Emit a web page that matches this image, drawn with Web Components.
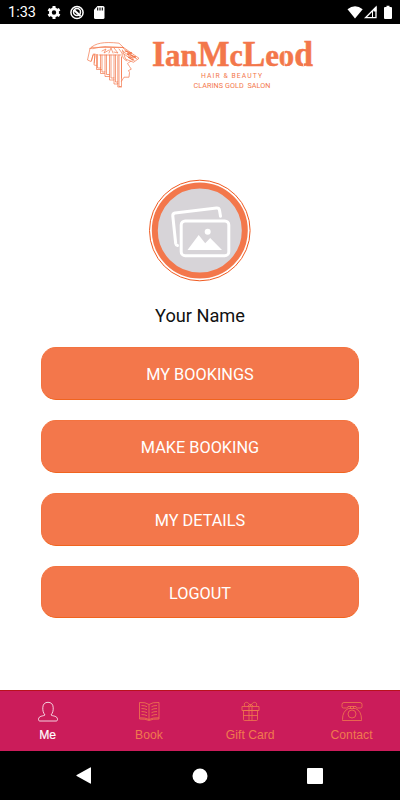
<!DOCTYPE html>
<html lang="en">
<head>
<meta charset="utf-8">
<title>Ian McLeod</title>
<style>
    body {
        margin: 0;
        background: #fff;
        font-family: Roboto, sans-serif;
    }
</style>
</head>
<body>
<salon-app></salon-app>

<script>
class StatusBar extends HTMLElement {
    constructor() {
        super();
        this.attachShadow({ mode: 'open' });
        this.shadowRoot.innerHTML = `
            <style>
                :host {
                    display: flex;
                    align-items: center;
                    height: 24px;
                    box-sizing: border-box;
                    padding: 0 7px 0 8px;
                    background: #000;
                    color: #fff;
                    font-size: 14.5px;
                }
                .time { width: 39px; line-height: 24px; padding-top: 2px; }
                svg { display: block; }
                .right { margin-left: auto; }
            </style>
            <span class="time"><slot></slot></span>
            <svg width="60" height="24" viewBox="0 0 60 24" fill="none" stroke="#fff">
                <circle cx="7" cy="12.5" r="3.6" stroke-width="2.8"/>
                <path d="M7 6v2.2M7 16.8V19M1.4 9.3l1.9 1.1M10.7 14.6l1.9 1.1M1.4 15.7l1.9-1.1M10.7 10.4l1.9-1.1" stroke-width="3"/>
                <circle cx="30" cy="12.5" r="6.1" stroke-width="1.5"/>
                <circle cx="30" cy="12.1" r="3.5" stroke-width="1.5"/>
                <path d="M27 10l6.5 6" stroke-width="2.2"/>
                <path d="M50.5 6H56q1.5 0 1.5 1.5v10q0 1.5-1.5 1.5h-7.5q-1.5 0-1.5-1.5V9.7z" fill="#fff" stroke="none"/>
                <path d="M50.7 7.5v3M53 7.5v3M55.3 7.5v3" stroke="#000" stroke-width="1.1"/>
            </svg>
            <svg class="right" width="46" height="24" viewBox="0 0 46 24">
                <path d="M.5 9.2Q8 3.2 15.7 9.2L8 18.5z" fill="#fff"/>
                <path d="M18.5 17.7L29 7v10.7z" fill="none" stroke="#fff" stroke-width="1.3"/>
                <path d="M26.5 9.5l3-3v5h-3z" fill="#fff"/>
                <path d="M25.5 11v6.5" stroke="#fff" stroke-width="1"/>
                <path d="M39.5 5.8h3V7H44q1 0 1 1v10q0 1-1 1h-6q-1 0-1-1V8q0-1 1-1h1.5z" fill="#fff"/>
            </svg>
        `;
    }
}
customElements.define('status-bar', StatusBar);

class SalonLogo extends HTMLElement {
    constructor() {
        super();
        this.attachShadow({ mode: 'open' });
        this.shadowRoot.innerHTML = `
            <style>
                :host { display: flex; justify-content: center; height: 72px; }
                svg { display: block; }
                .word {
                    font: bold 35px "Liberation Serif", serif;
                    stroke: #f3774b;
                    stroke-width: .5;
                }
                .small { font-family: Roboto, sans-serif; }
            </style>
            <svg width="400" height="72" viewBox="0 24 400 72" fill="#f3774b">
                <!-- profile with pleated headdress -->
                <g fill="none" stroke="#f3774b" stroke-width=".7" stroke-linejoin="round" stroke-linecap="round">
                    <path d="M90 48.5C95 43 104 41.5 119 43.2l4.5 4.3-32-.1"/>
                    <path d="M90 48.5c4 1.2 8-1.8 15-2l18.5 1"/>
                    <path d="M90 48.5L87.5 60l3.5 1.5 2.3-7.5M91.5 61l1.5-6 2-1-.8 9"/>
                    <path d="M95 54l-1 11 2.500.5V54.5M97.5 54.5V68h3V55M102 55v17h3V55M106.5 55v19.5h3V55M111 55v23h3V55M115.5 55v27h2.3V56M119 55v31.5h2.5V57"/>
                    <path d="M96.5 65.5v4h5M100.5 68v5.5h4M105 72v4.5h4.5v-2M109.5 76v4h4.5v-2M114 80v4h3.8v-2M117.8 83.5v3.5h3.7"/>
                    <path d="M102 51l4-2-2 4 5-3M109 53l2-5 2 5M114 48l4 5-4-1M119 49l3 4M99 55h22"/>
                    <path d="M123.5 47.5L139 58.3l-5.5 4-8-3.3-3-9M123 48l8 6.5M122.5 51l11 8M124 54l9 6.5M126 51l11 8M131 55l4 3M122 53c0 4 2 7 5 8"/>
                    <path d="M125 51l7 2-5 1 9 3-8 .2 6 3" stroke-width="1"/>
                    <path d="M131 61l-3.5 2.5 2 3 1.8 2.7-2.8 1.3 1 2-.5 4.7h-5l-2.5 4M121.5 57v21"/>
                </g>
                <text class="word" x="152" y="66" textLength="161" lengthAdjust="spacingAndGlyphs">I<tspan font-size="32">an</tspan>M<tspan font-size="31">c</tspan>L<tspan font-size="32">eo</tspan>d</text>
                <!-- stencil cuts through the wordmark -->
                <path d="M284.3 51v16M303.500 52v14" fill="none" stroke="#fff" stroke-width=".6"/>
                <text class="small" x="201" y="77.7" font-size="6.8" textLength="61">HAIR &amp; BEAUTY</text>
                <text class="small" x="193.5" y="88.2" font-size="7.2" textLength="77" xml:space="preserve">CLARINS GOLD  SALON</text>
            </svg>
        `;
    }
}
customElements.define('salon-logo', SalonLogo);

class ProfilePhoto extends HTMLElement {
    constructor() {
        super();
        this.attachShadow({ mode: 'open' });
        this.shadowRoot.innerHTML = `
            <style>
                :host { display: flex; flex-direction: column; align-items: center; }
                svg { display: block; }
                .name {
                    margin-top: 22px;
                    font-size: 18.2px;
                    line-height: 24px;
                    color: #111;
                }
            </style>
            <svg width="104" height="104" viewBox="148 178 104 104">
                <circle cx="199.8" cy="230.5" r="50.3" fill="#fff" stroke="#f05a20" stroke-width="1"/>
                <circle cx="199.8" cy="230.5" r="45" fill="#d7d4d8" stroke="#f3774b" stroke-width="6"/>
                <g fill="none" stroke="#fff" stroke-width="3" stroke-linejoin="round" stroke-linecap="round">
                    <path d="M177.5 245.5q-1.5-.2-1.8-2L172.800 216q-.2-2.500 2.200-3l41.500-5q2.600-.2 3 2.200l1 6"/>
                    <rect x="181.2" y="221" width="47.6" height="34.7" rx="4"/>
                </g>
                <circle cx="207.7" cy="231.7" r="3" fill="#fff"/>
                <path d="M187.5 250l11.2-15 6.5 8.3 5-5.3L222 250z" fill="#fff"/>
            </svg>
            <div class="name"><slot></slot></div>
        `;
    }
}
customElements.define('profile-photo', ProfilePhoto);

class MenuButton extends HTMLElement {
    constructor() {
        super();
        this.attachShadow({ mode: 'open' });
        this.shadowRoot.innerHTML = `
            <style>
                :host { display: block; }
                button {
                    display: block;
                    width: 100%;
                    height: 52.4px;
                    padding: 2px 0 0;
                    border: 1px solid #f3733f;
                    border-bottom-color: #f0641f;
                    border-radius: 15px;
                    background: #f3774b;
                    color: #fff;
                    font: 16.3px Roboto, sans-serif;
                }
            </style>
            <button><slot></slot></button>
        `;
    }
}
customElements.define('menu-button', MenuButton);

const TAB_ICONS = {
    me: `<path d="M8 14C6.3 12 5.6 9.5 5.8 6.500 6 3 8 1.300 11 1.300s5 1.700 5.200 5.200c.2 3-.5 5.500-2.200 7.500 1.500 1.300 6.500.5 6.500 4.500 0 1-.5 1.500-1.500 1.500H3c-1 0-1.500-.5-1.500-1.500C1.500 14.500 6.500 15.300 8 14"/>`,
    book: `<path d="M11 3.5Q7.5 1 1.500 1.500v15.300Q7.500 16.500 11 18.500q3.500-2 10-1.700V1.500Q14.500 1 11 3.500v15M1.500 16.800v1.200q6-.3 9.500 1.500 3.500-1.800 10-1.500v-1.200M3.500 4.500q3.500 0 5.500 1.200M3.500 7.500q3.500 0 5.500 1.200M3.500 10.500q3.500 0 5.500 1.200M3.500 13.500q3.500 0 5.500 1.200M19 4.500q-3.500 0-5.500 1.200M19 7.500q-3.500 0-5.500 1.200M19 10.500q-3.500 0-5.500 1.200M19 13.500q-3.500 0-5.500 1.200"/>`,
    gift: `<path d="M3 5.500h17v4H3zM4.500 9.500h14v9q0 1-1 1h-12q-1 0-1-1zM10 5.500v14M13 5.500v14M4.500 14.500h14M11.500 5C9.500 1.500 8 1 6.500 1.500S5 4 6 5.500M11.500 5c2-3.500 3.500-4 5-3.500S18 4 17 5.500M8.500 5.500l2-2h2l2 2"/>`,
    phone: `<path d="M3 1.500h16q2 0 2 2v2Q21 7 19.500 7h-3Q15 7 15 5.500H7Q7 7 5.500 7h-3Q1 7 1 5.500v-2q0-2 2-2zM9.500 5.500v2M12.500 5.500v2M7.500 7.500h7M7.500 7.500Q1.500 10 1.500 18.500v1h19v-1q0-8.500-6-11"/><circle cx="11" cy="13" r="4"/>`
};

class TabItem extends HTMLElement {
    constructor() {
        super();
        this.attachShadow({ mode: 'open' });
    }

    connectedCallback() {
        this.render();
    }

    render() {
        const icon = TAB_ICONS[this.getAttribute('icon')] || '';
        this.shadowRoot.innerHTML = `
            <style>
                :host {
                    display: flex;
                    flex-direction: column;
                    align-items: center;
                    color: #f07a4e;
                }
                :host([active]) { color: #fff; }
                svg {
                    display: block;
                    margin-top: 10px;
                    fill: none;
                    stroke: currentColor;
                    stroke-width: .8;
                    stroke-linejoin: round;
                }
                .label { margin-top: 5px; line-height: 16px; white-space: nowrap; }
                :host([active]) .label { -webkit-text-stroke: .15px #fff; }
            </style>
            <svg width="22" height="21" viewBox="0 0 22 21">${icon}</svg>
            <span class="label"><slot></slot></span>
        `;
    }
}
customElements.define('tab-item', TabItem);

class TabBar extends HTMLElement {
    constructor() {
        super();
        this.attachShadow({ mode: 'open' });
        this.shadowRoot.innerHTML = `
            <style>
                :host {
                    display: block;
                    height: 61px;
                    box-sizing: border-box;
                    border-top: 1px solid #b8121c;
                    background: #cb1c5a;
                    font: 12.2px "Liberation Sans", sans-serif;
                    overflow: hidden;
                }
                nav {
                    display: grid;
                    grid-template-columns: repeat(4, 101.3px);
                    margin-left: -3px;
                }
            </style>
            <nav><slot></slot></nav>
        `;
    }
}
customElements.define('tab-bar', TabBar);

class SystemNav extends HTMLElement {
    constructor() {
        super();
        this.attachShadow({ mode: 'open' });
        this.shadowRoot.innerHTML = `
            <style>
                :host {
                    display: flex;
                    align-items: center;
                    justify-content: space-between;
                    height: 49px;
                    box-sizing: border-box;
                    padding: 0 77px 0 76px;
                    background: #000;
                }
                svg { display: block; fill: #fff; }
            </style>
            <svg width="16" height="17" viewBox="0 0 16 17"><path d="M15 .7v15.6q0 .7-.8.3L.7 9Q0 8.5.7 8L14.2.4q.8-.4.8.3z"/></svg>
            <svg width="16" height="16" viewBox="0 0 16 16"><circle cx="8" cy="8" r="7.5"/></svg>
            <svg width="16" height="16" viewBox="0 0 16 16"><rect width="16" height="16" rx="1"/></svg>
        `;
    }
}
customElements.define('system-nav', SystemNav);

class SalonApp extends HTMLElement {
    constructor() {
        super();
        this.attachShadow({ mode: 'open' });
        this.shadowRoot.innerHTML = `
            <style>
                :host {
                    display: flex;
                    flex-direction: column;
                    width: 400px;
                    height: 800px;
                    overflow: hidden;
                }
                main { flex: 1; padding-top: 82px; }
                .menu {
                    display: grid;
                    gap: 20.5px;
                    padding: 19.4px 41px 0;
                }
            </style>
            <status-bar>1:33</status-bar>
            <salon-logo></salon-logo>
            <main>
                <profile-photo>Your Name</profile-photo>
                <div class="menu">
                    <menu-button>MY BOOKINGS</menu-button>
                    <menu-button>MAKE BOOKING</menu-button>
                    <menu-button>MY DETAILS</menu-button>
                    <menu-button>LOGOUT</menu-button>
                </div>
            </main>
            <tab-bar>
                <tab-item icon="me" active>Me</tab-item>
                <tab-item icon="book">Book</tab-item>
                <tab-item icon="gift">Gift Card</tab-item>
                <tab-item icon="phone">Contact</tab-item>
            </tab-bar>
            <system-nav></system-nav>
        `;
    }
}
customElements.define('salon-app', SalonApp);
</script>
</body>
</html>
